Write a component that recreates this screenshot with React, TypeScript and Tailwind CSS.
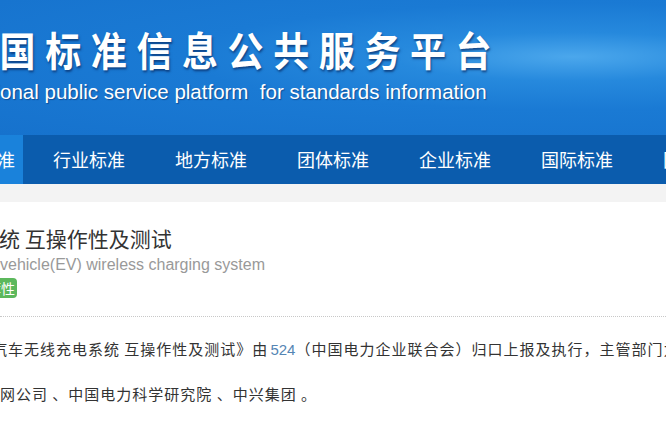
const cjk = "font-['Noto_Sans_CJK_SC',sans-serif]";
const latin = "font-['Liberation_Sans','Noto_Sans_CJK_SC',sans-serif]";

const navItems = ["行业标准", "地方标准", "团体标准", "企业标准", "国际标准", "国外标准"];

function Banner() {
  return (
    <header className="h-[135px] overflow-hidden bg-[radial-gradient(ellipse_at_86%_42%,#4ba7ec_0%,#2689dd_22%,#1a7ad4_48%,#1672cd_100%)]">
      <div className="flex flex-col pt-[25px]">
        <h1
          className={`-ml-[46px] origin-center scale-y-[1.12] whitespace-nowrap text-[36px] font-bold leading-[46px] tracking-[9.6px] text-white [text-shadow:1px_2px_2px_rgba(10,50,110,0.75)] ${cjk}`}
        >
          全国标准信息公共服务平台
        </h1>
        <p
          className={`-ml-[33px] mt-[9px] whitespace-nowrap text-[20.5px] leading-[24px] text-white [text-shadow:1px_1px_1px_rgba(10,50,110,0.6)] ${latin}`}
        >
          national public service platform&nbsp; for standards information
        </p>
      </div>
    </header>
  );
}

function NavBar() {
  return (
    <nav className={`flex h-[49px] items-center overflow-hidden bg-[#0b5cad] text-white ${cjk}`}>
      <div className="-ml-[63px] flex h-full shrink-0 items-center bg-[#1a82db] pr-[8px] pl-[6px] text-[18px]">
        国家标准
      </div>
      <ul className="ml-[5px] flex h-full shrink-0">
        {navItems.map((item) => (
          <li key={item} className="flex w-[122px] shrink-0 items-center justify-center text-[18px]">
            {item}
          </li>
        ))}
      </ul>
    </nav>
  );
}

function Detail() {
  return (
    <main className="bg-white">
      <div className="h-[18px] bg-[#f3f3f3]" />
      <section className="pt-[21px]">
        <h2 className={`-ml-[1px] whitespace-nowrap text-[21px] leading-[30px] text-[#333] ${cjk}`}>
          统 互操作性及测试
        </h2>
        <p className={`mt-[1px] whitespace-nowrap text-[16px] leading-[22px] text-[#999] ${latin}`}>
          vehicle(EV) wireless charging system
        </p>
        <span
          className={`-ml-[29px] mt-[2px] inline-block rounded-[4px] bg-[#5cb85c] px-[2px] text-[14px] leading-[20px] text-white ${cjk}`}
        >
          推荐性
        </span>
      </section>
      <hr className="mt-[16px] border-0 border-t border-dotted border-[#c8c8c8]" />
      <div className={`pt-[21px] text-[15px] tracking-[1px] text-[#333] ${cjk}`}>
        <p className="-ml-[8px] whitespace-nowrap leading-[22px]">
          汽车无线充电系统 互操作性及测试》由<span className={`ml-[2px] tracking-normal text-[#5585b4] ${latin}`}>524</span>（中国电力企业联合会）归口上报及执行，主管部门为中国电力企业联合会。
        </p>
        <p className="mt-[22px] whitespace-nowrap leading-[22px]">网公司 、中国电力科学研究院 、中兴集团 。</p>
      </div>
      <div className="h-[40px]" />
    </main>
  );
}

export default function App() {
  return (
    <div className="w-[666px] overflow-hidden bg-white">
      <Banner />
      <NavBar />
      <Detail />
    </div>
  );
}
